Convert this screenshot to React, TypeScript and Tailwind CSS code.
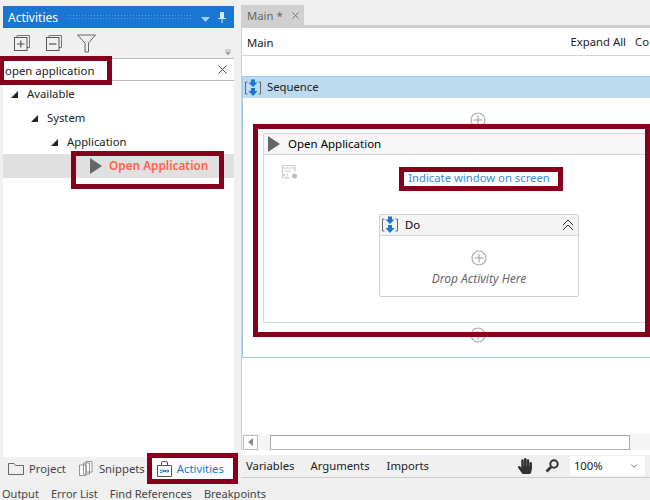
import { ChevronDown, X } from 'lucide-react'
import { FaHandPaper } from 'react-icons/fa'

const SequenceIcon = () => (
  <svg width="18" height="18" viewBox="0 0 18 18" className="shrink-0">
    <path d="M2.5 3H0.5V15H2.5M13.5 3H15.5V15H13.5" fill="none" stroke="#666" strokeWidth="1" />
    <path d="M6 0.5H10V3.5H12.5L8 8L3.5 3.5H6Z" fill="#1976d2" />
    <path d="M6 9H10V12H12.5L8 17L3.5 12H6Z" fill="#1976d2" />
  </svg>
)

const PlusCircle = () => (
  <svg width="16" height="16" viewBox="0 0 16 16">
    <circle cx="8" cy="8" r="7" fill="#fff" stroke="#aaa" strokeWidth="1.2" />
    <path d="M8 3.5V12.5M3.5 8H12.5" stroke="#999" strokeWidth="1" />
  </svg>
)

const Play = () => (
  <svg width="12" height="16" viewBox="0 0 12 16" className="shrink-0">
    <path d="M0 0L12 8L0 16Z" fill="#666" />
  </svg>
)

const TreeArrow = () => (
  <svg width="7" height="7" viewBox="0 0 7 7" className="shrink-0">
    <path d="M7 0V7H0Z" fill="#222" />
  </svg>
)

const ExpandBox = ({ minus }: { minus?: boolean }) => (
  <svg width="16" height="16" viewBox="0 0 16 16">
    <path d="M3 2.5V0.5H15.5V12.5H13" fill="none" stroke="#777" />
    <rect x="0.5" y="2.5" width="12.5" height="13" fill="none" stroke="#555" />
    <path d={minus ? 'M3 9H10.5' : 'M3 9H10.5M6.8 5.5V12.5'} stroke="#555" strokeWidth="1.2" />
  </svg>
)

const TreeRow = ({ indent, label }: { indent: string; label: string }) => (
  <div className={`flex h-6 items-center ${indent}`}>
    <TreeArrow />
    <span className="ml-[9px] text-[#222]">{label}</span>
  </div>
)

const App = () => {
  return (
    <div className="relative flex h-[500px] w-[650px] flex-col overflow-hidden bg-[#f0f0f0] font-['Noto_Sans',sans-serif] text-[11.3px] leading-none text-[#222]">
      <div className="flex h-[480px]">
        {/* activities panel */}
        <div className="mt-[6px] ml-[3px] flex w-[231px] flex-col">
          <div className="flex h-[22px] items-center bg-[#1976d2] pr-[8px] pl-[5px] text-[12px] text-white">
            <span className="pt-[2px]">Activities</span>
            <div className="mr-[9px] ml-2 h-[6px] flex-1 bg-[radial-gradient(#5a9fe0_1px,transparent_1px)] bg-[length:3px_3px]" />
            <svg width="9" height="5" viewBox="0 0 9 5" className="mt-1 mr-[8px]">
              <path d="M0 0H9L4.5 5Z" fill="#a9cdf0" />
            </svg>
            <svg width="8" height="11" viewBox="0 0 8 11">
              <path d="M2 0H6V6H8V7H4.5V11H3.5V7H0V6H2Z" fill="#d5e6f7" />
            </svg>
          </div>
          <div className="flex h-[31px] items-center gap-4 border-b border-[#bbb] pl-[11px]">
            <ExpandBox />
            <ExpandBox minus />
            <svg width="19" height="19" viewBox="0 0 19 19" className="-ml-[1px]">
              <path d="M0.5 1H18.5L11.5 9V18H8V9Z" fill="none" stroke="#666" />
            </svg>
            <svg width="6" height="6" viewBox="0 0 6 6" className="mt-[17px] ml-[113px]">
              <path d="M0 0H6M0 2H6M1 3.5H5L3 6Z" stroke="#999" strokeWidth="0.7" fill="#999" />
            </svg>
          </div>
          <div className="flex h-[22px] items-center justify-between border-b border-[#bbb] bg-white pr-[4px] pl-[2px]">
            <span className="pt-[2px] text-[11.4px]">open application</span>
            <X size={15} strokeWidth={1.3} className="text-[#222]" />
          </div>
          <div className="flex flex-1 flex-col bg-white pt-[1px]">
            <TreeRow indent="pl-[8px]" label="Available" />
            <TreeRow indent="pl-[28px]" label="System" />
            <TreeRow indent="pl-[48px]" label="Application" />
            <div className="flex h-6 items-center bg-[#e0e0e0] pl-[87px]">
              <Play />
              <span className="ml-[7px] text-[11.8px] font-semibold text-[#ff6347]">Open Application</span>
            </div>
          </div>
          {/* panel tabs */}
          <div className="flex h-[23px] items-center text-[#444]">
            <div className="flex items-center pl-[5px]">
              <svg width="16" height="12" viewBox="0 0 16 12">
                <path d="M0.5 11.5V0.5H6L7.5 2.5H15.5V11.5Z" fill="none" stroke="#666" />
              </svg>
              <span className="ml-[5px]">Project</span>
            </div>
            <div className="ml-[13px] flex items-center">
              <svg width="14" height="15" viewBox="0 0 14 15">
                <path d="M7 0.5H13V11H7ZM4.5 2H10.5V13H4.5ZM0.5 4H7V14.5H0.5Z" fill="#fff" stroke="#777" strokeWidth="0.8" />
              </svg>
              <span className="ml-[6px]">Snippets</span>
            </div>
            <div className="ml-[6px] flex h-[22px] w-[82px] items-center bg-white pl-[6px]">
              <svg width="15" height="16" viewBox="0 0 15 16">
                <path d="M0.5 4.5H14.5V15.5H0.5ZM4.5 4.5V2Q4.5 0.5 6 0.5H9Q10.5 0.5 10.5 2V4.5" fill="none" stroke="#555" />
                <path d="M3 9.5L5.5 9L9.5 11L12 10.5M3 11.5L5.5 11L9.5 9L12 9.5" fill="none" stroke="#1976d2" />
              </svg>
              <span className="ml-[5px] text-[#1976d2]">Activities</span>
            </div>
          </div>
        </div>

        {/* designer */}
        <div className="mt-[5px] ml-[7px] flex min-w-0 flex-1 flex-col">
          <div className="flex h-5 w-[63px] shrink-0 items-center gap-[7px] bg-[#d0d0d0] pl-[6px] text-[#666]">
            <span className="pt-[1px]">Main *</span>
            <X size={11} strokeWidth={1.8} />
          </div>
          <div className="flex h-[409px] shrink-0 flex-col overflow-hidden border-t-[3px] border-l border-[#cfcfcf] bg-white">
            <div className="flex h-[28px] shrink-0 items-center justify-between border-b border-[#d5d5d5] pr-[1px] pl-[5px]">
              <span className="pt-[2px]">Main</span>
              <div className="flex gap-[9px] whitespace-nowrap">
                <span>Expand All</span>
                <span>Co</span>
              </div>
            </div>
            <div className="h-5 shrink-0" />
            <div className="h-[282px] w-[460px] shrink-0 border border-[#9ccbea]">
              <div className="flex h-[21px] items-center gap-1 bg-[#bedaef] pl-[2px]">
                <SequenceIcon />
                <span className="pb-[2px]">Sequence</span>
              </div>
              <div className="mt-[35px] ml-[20px] flex h-[190px] w-[432px] flex-col rounded-[2px] border border-[#d5d5d5]">
                <div className="flex h-[21px] shrink-0 items-center gap-[8px] border-b border-[#d5d5d5] bg-[#f6f6f6] pl-[4px]">
                  <Play />
                  <span className="pb-[1px] text-[11.5px] text-black">Open Application</span>
                </div>
                <div className="relative flex flex-1 flex-col items-center">
                  <svg width="17" height="15" viewBox="0 0 17 15" className="absolute top-[10px] left-[18px]">
                    <path d="M13 7V0.5H0.5V13H8M0.5 3H13M3 6H9M3 9L1 10L3 11M6 8L4.5 12" fill="none" stroke="#bbb" strokeWidth="0.8" />
                    <circle cx="12.5" cy="11" r="2.5" fill="#bbb" />
                  </svg>
                  <span className="mt-[17px] text-[#3b8ad8]">Indicate window on screen</span>
                  <div className="mt-[31px] flex h-[83px] w-[200px] flex-col rounded-[2px] border border-[#d0d0d0] bg-white">
                    <div className="flex h-[21px] shrink-0 items-center gap-[5px] border-b border-[#d5d5d5] bg-[#f4f4f4] pr-[4px] pl-[2px]">
                      <SequenceIcon />
                      <span className="flex-1 pb-[2px] text-black">Do</span>
                      <svg width="12" height="12" viewBox="0 0 12 12">
                        <path d="M1 6L6 1L11 6M1 11L6 6L11 11" fill="none" stroke="#333" />
                      </svg>
                    </div>
                    <div className="flex flex-1 flex-col items-center pt-[14px]">
                      <PlusCircle />
                      <span className="mt-[7px] text-[12px] text-[#666] italic">Drop Activity Here</span>
                    </div>
                  </div>
                </div>
              </div>
            </div>
          </div>
          {/* horizontal scrollbar */}
          <div className="flex h-[16px] shrink-0 items-center border-l border-[#cfcfcf] bg-[#f5f5f5] pl-[1px]">
            <div className="flex h-[15px] w-[15px] items-center justify-center border border-[#bbb] bg-white">
              <svg width="5" height="8" viewBox="0 0 5 8">
                <path d="M5 0V8L0 4Z" fill="#888" />
              </svg>
            </div>
            <div className="ml-[12px] h-[15px] w-[360px] border border-[#aaa] bg-white" />
          </div>
          <div className="h-[5px] shrink-0 bg-white" />
          <div className="flex h-[23px] shrink-0 items-center border-b border-[#ccc] pl-[5px] text-[#222]">
            <span>Variables</span>
            <span className="ml-[16px]">Arguments</span>
            <span className="ml-[17px]">Imports</span>
            <FaHandPaper size={16} className="ml-[88px] text-[#333]" />
            <svg width="14" height="14" viewBox="0 0 14 14" className="ml-[12px]">
              <circle cx="9" cy="5" r="3.7" fill="none" stroke="#333" strokeWidth="2" />
              <path d="M6 8L1.5 12.5" stroke="#333" strokeWidth="2.6" />
            </svg>
            <div className="ml-[11px] flex h-[20px] w-[75px] items-center justify-between bg-white pr-[6px] pl-[4px]">
              <span>100%</span>
              <ChevronDown size={10} className="text-[#555]" />
            </div>
          </div>
        </div>
      </div>

      {/* bottom tabs */}
      <div className="flex h-[20px] items-center gap-[12px] pt-[6px] pl-[2px] text-[11px] text-[#444]">
        <span>Output</span>
        <span>Error List</span>
        <span>Find References</span>
        <span>Breakpoints</span>
      </div>

      {/* plus buttons sitting on the sequence */}
      <div className="absolute top-[112px] left-[470px]">
        <PlusCircle />
      </div>
      <div className="absolute top-[327px] left-[470px]">
        <PlusCircle />
      </div>

      {/* red tutorial highlight frames */}
      <div className="pointer-events-none absolute top-[56px] left-[-1px] h-[29px] w-[113px] border-[5px] border-[#85001a]" />
      <div className="pointer-events-none absolute top-[151px] left-[71px] h-[38px] w-[153px] border-[5px] border-[#85001a]" />
      <div className="pointer-events-none absolute top-[453px] left-[147px] h-[31px] w-[91px] border-[5px] border-[#85001a]" />
      <div className="pointer-events-none absolute top-[124px] left-[253px] h-[213px] w-[397px] border-[5px] border-[#85001a]" />
      <div className="pointer-events-none absolute top-[167px] left-[399px] h-[24px] w-[164px] border-[5px] border-[#85001a]" />
    </div>
  )
}

export default App
